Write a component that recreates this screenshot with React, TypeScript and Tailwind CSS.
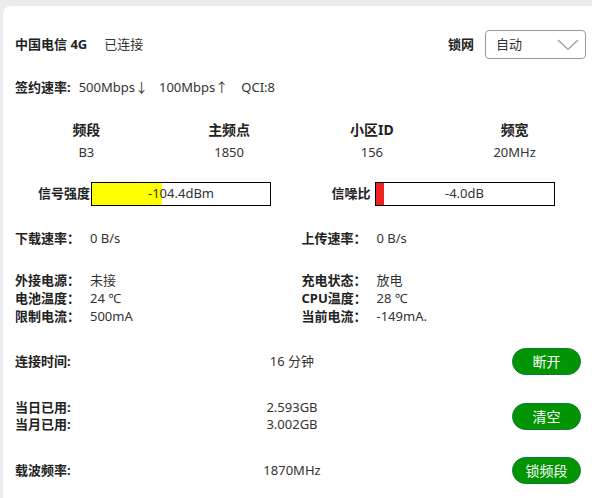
import React from "react";

const font = { fontFamily: '"Noto Sans", "Noto Sans CJK SC", sans-serif' };

function Bar({ label, value, fill, color, gap }: { label: string; value: string; fill: number; color: string; gap: string }) {
  return (
    <div className="flex items-center">
      <div className={`w-[76px] text-right font-bold text-[#222] ${gap}`}>{label}</div>
      <div className="relative h-[24px] w-[180px] border border-black bg-white">
        <div className={`h-full ${color}`} style={{ width: fill }} />
        <div className="absolute inset-0 flex items-center justify-center text-[#333]">{value}</div>
      </div>
    </div>
  );
}

function GreenButton({ children }: { children: React.ReactNode }) {
  return (
    <button className="h-[27px] w-[69px] rounded-full border border-[#0c7a35] bg-[#039403] text-[14px] text-white">
      {children}
    </button>
  );
}

export default function App() {
  return (
    <div className="min-h-[498px] bg-[#ececee] pl-[3px] pt-[6px]" style={font}>
      <div className="h-[492px] overflow-hidden rounded-tl-[8px] bg-white pl-[12px] pr-[6px] pt-[24px] text-[13px] text-[#333]">
        {/* header */}
        <div className="flex h-[29px] items-center">
          <span className="font-bold text-[#222]">中国电信 4G</span>
          <span className="ml-[17px]">已连接</span>
          <span className="ml-auto mr-[11px] font-bold text-[#222]">锁网</span>
          <div className="flex h-[29px] w-[101px] items-center rounded-[4px] border border-[#999] pl-[10px] pr-[6px]">
            <span>自动</span>
            <svg className="ml-auto" width="22" height="12" viewBox="0 0 22 12" fill="none">
              <path d="M1 1 L11 10.5 L21 1" stroke="#999" strokeWidth="1.2" />
            </svg>
          </div>
        </div>

        <div className="mt-[20px] flex h-[18px] items-center">
          <span className="font-bold text-[#222]">签约速率:</span>
          <span className="ml-[8px]">500Mbps↓</span>
          <span className="ml-[11px]">100Mbps↑</span>
          <span className="ml-[13px]">QCI:8</span>
        </div>

        {/* cell table */}
        <div className="mt-[22px] grid grid-cols-4 text-center leading-[22px]">
          <div className="text-[14px] font-bold text-[#222]">频段</div>
          <div className="text-[14px] font-bold text-[#222]">主频点</div>
          <div className="text-[14px] font-bold text-[#222]">小区ID</div>
          <div className="text-[14px] font-bold text-[#222]">频宽</div>
          <div>B3</div>
          <div>1850</div>
          <div>156</div>
          <div>20MHz</div>
        </div>

        <div className="mt-[19px] grid grid-cols-2">
          <Bar label="信号强度" value="-104.4dBm" fill={70} color="bg-[#ffff00]" gap="pr-[1px]" />
          <div className="-ml-[2px]">
            <Bar label="信噪比" value="-4.0dB" fill={8} color="bg-[#ee2222]" gap="pr-[4px]" />
          </div>
        </div>

        <div className="mt-[23px] grid grid-cols-2 leading-[18px]">
          <div className="flex">
            <span className="w-[75px] font-bold text-[#222]">下载速率：</span>
            <span>0 B/s</span>
          </div>
          <div className="ml-[1px] flex">
            <span className="w-[75px] font-bold text-[#222]">上传速率：</span>
            <span>0 B/s</span>
          </div>
        </div>

        <div className="mt-[24px] grid grid-cols-2 leading-[18px]">
          <div>
            <div className="flex">
              <span className="w-[75px] font-bold text-[#222]">外接电源：</span>
              <span>未接</span>
            </div>
            <div className="flex">
              <span className="w-[75px] font-bold text-[#222]">电池温度：</span>
              <span>24 ℃</span>
            </div>
            <div className="flex">
              <span className="w-[75px] font-bold text-[#222]">限制电流：</span>
              <span>500mA</span>
            </div>
          </div>
          <div className="ml-[1px]">
            <div className="flex">
              <span className="w-[75px] font-bold text-[#222]">充电状态：</span>
              <span>放电</span>
            </div>
            <div className="flex">
              <span className="w-[75px] font-bold text-[#222]">CPU温度：</span>
              <span>28 ℃</span>
            </div>
            <div className="flex">
              <span className="w-[75px] font-bold text-[#222]">当前电流：</span>
              <span>-149mA.</span>
            </div>
          </div>
        </div>

        {/* actions */}
        <div className="mt-[23px] flex h-[27px] items-center pr-[5px]">
          <span className="w-[200px] font-bold text-[#222]">连接时间:</span>
          <span className="w-[154px] text-center">16 分钟</span>
          <div className="ml-auto">
            <GreenButton>断开</GreenButton>
          </div>
        </div>

        <div className="mt-[24px] flex h-[34px] items-center pr-[5px] leading-[17px]">
          <div className="w-[200px] font-bold text-[#222]">
            <div>当日已用:</div>
            <div>当月已用:</div>
          </div>
          <div className="w-[154px] text-center">
            <div>2.593GB</div>
            <div>3.002GB</div>
          </div>
          <div className="ml-auto">
            <GreenButton>清空</GreenButton>
          </div>
        </div>

        <div className="mt-[24px] flex h-[27px] items-center pr-[5px]">
          <span className="w-[200px] font-bold text-[#222]">载波频率:</span>
          <span className="w-[154px] text-center">1870MHz</span>
          <div className="ml-auto">
            <GreenButton>锁频段</GreenButton>
          </div>
        </div>
      </div>
    </div>
  );
}
